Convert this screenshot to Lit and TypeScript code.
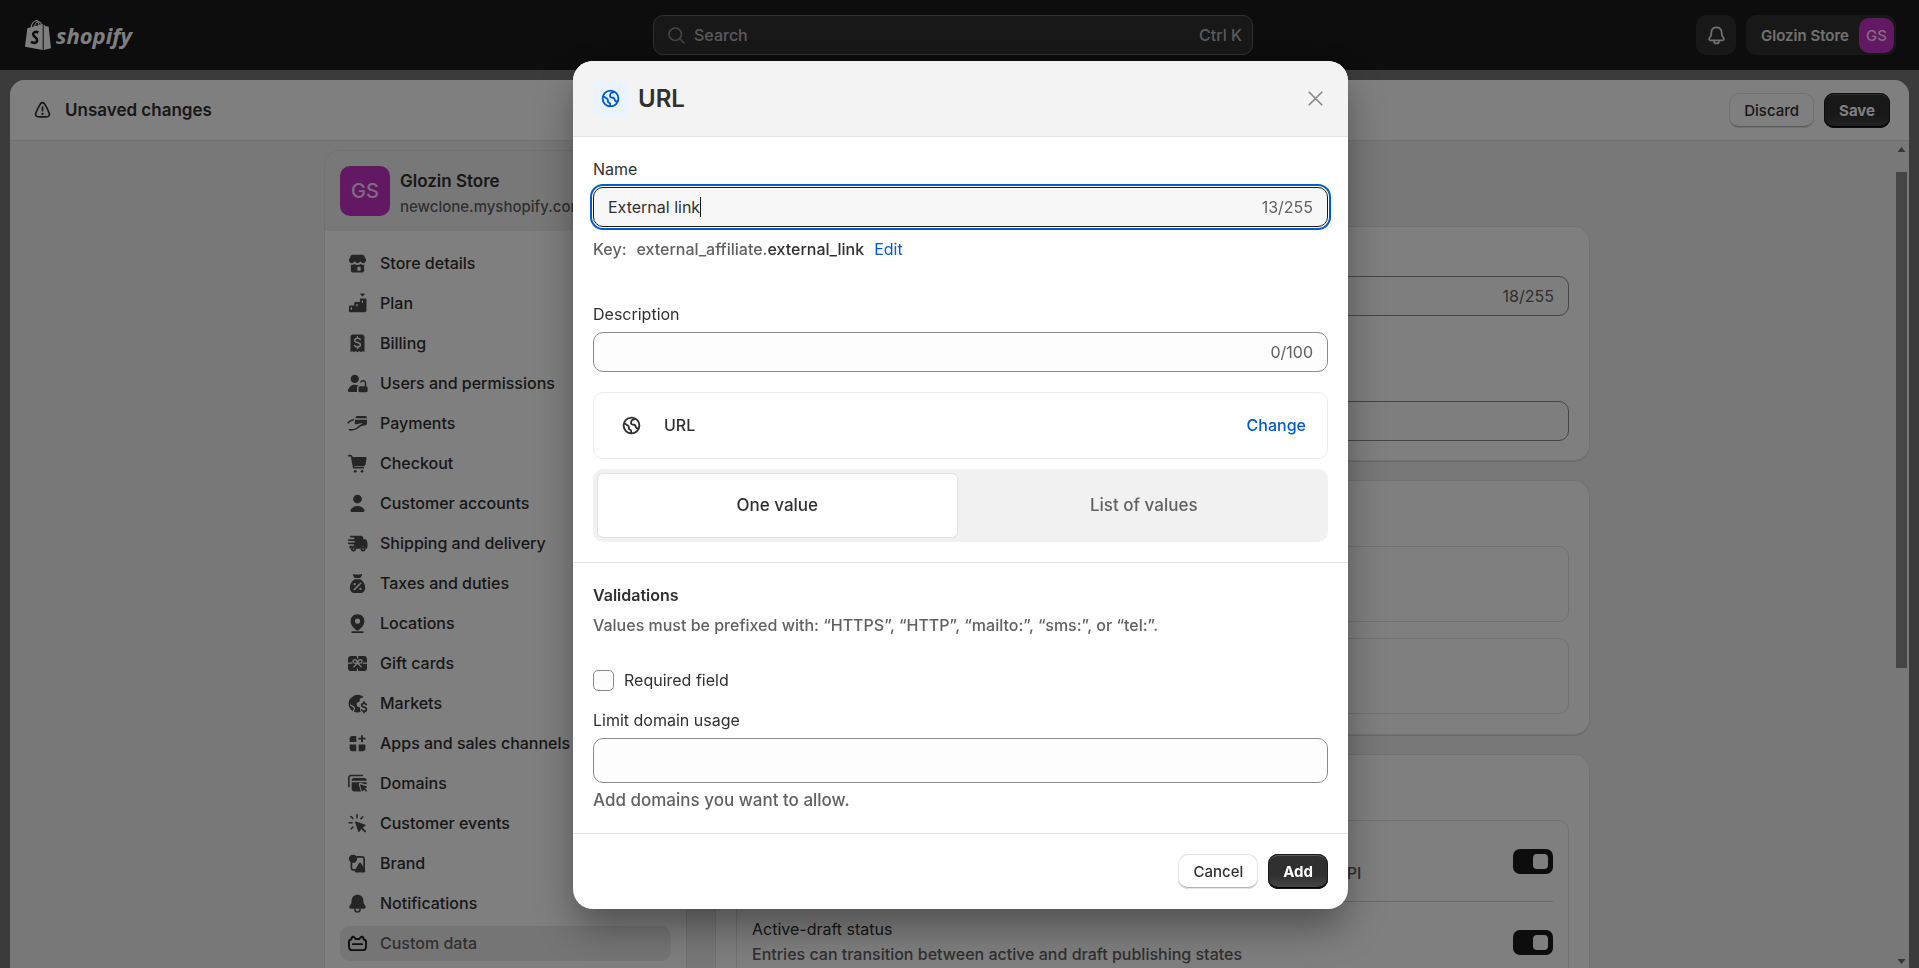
import { LitElement, html, svg, css, nothing, type TemplateResult } from "lit";
import { customElement, property } from "lit/decorators.js";
import { classMap } from "lit/directives/class-map.js";

const ICONS: Record<string, TemplateResult> = {
  store: svg`<path d="M6.2 3h7.6c.7 0 1.3.4 1.6 1l1.3 2.600c.5 1.800-.6 3.100-2.100 3.100-.6 0-1.200-.3-1.600-.7l-.7-.8-.8.8c-.4.4-.9.7-1.500.7s-1.100-.3-1.500-.7l-.8-.8-.7.8c-.4.4-1 .7-1.600.7-1.500 0-2.600-1.300-2.100-3.100l1.300-2.600c.3-.6.900-1 1.600-1z"/><path fill-rule="evenodd" d="M4.700 11c1 .2 2-.1 2.800-.7.7.6 1.600.9 2.500.9s1.800-.3 2.500-.9c.8.6 1.800.9 2.800.7v4.500c0 1-.8 1.700-1.700 1.700H6.400c-1 0-1.700-.8-1.700-1.700zM10.400 12.500h1.600c.3 0 .5.2.5.5v2.700h-2.600V13c0-.3.2-.5.5-.5z"/>`,
  plan: svg`<path fill-rule="evenodd" d="M11.900 6.900c0-.6.4-1 1-1h3.300c.6 0 1 .4 1 1v8.400c0 .9-.7 1.600-1.600 1.600H4.200c-.6 0-1-.4-1-1v-3.400c0-.6.4-1 1-1h3.200V9.700c0-.6.4-1 1-1h3.500zM4.600 13v2h1v-2zM9 10.300v1.900h1v-1.900zM13.400 7.500v1.900h1V7.500z"/><path d="M12.400 2h3.200v.8L14 4.400l-1.600-1.600z"/>`,
  billing: svg`<path fill-rule="evenodd" d="M6.300 2.800h7.400c1.100 0 1.900.8 1.900 1.900v12.200l-1.400-1-1.400 1-1.400-1-1.400 1-1.400-1-1.400 1-1.400-1-1.400 1V4.700c0-1.100.8-1.900 1.900-1.900z"/><path fill="none" stroke="#fff" stroke-width="1.200" stroke-linecap="round" d="M12.200 6.800c-.5-.7-1.200-1-2.200-1-1.300 0-2.200.7-2.200 1.700 0 2.300 4.500 1.100 4.500 3.500 0 1-1 1.700-2.300 1.700-1.100 0-1.900-.4-2.400-1.100M10 4.500v1.200M10 12.800V14"/>`,
  users: svg`<circle cx="7.800" cy="6.300" r="3.300"/><path d="M7.800 10.900c1.200 0 2.200.2 3 .6-.9.5-1.200 1-1.200 2v3.300H3.400c-1 0-1.400-1-1-1.800.9-2.600 3-4.100 5.400-4.100z"/><rect x="10.800" y="12.200" width="7.300" height="4.700" rx="1.200"/><path fill="none" stroke="currentColor" stroke-width="1.200" stroke-linecap="round" d="M12.700 8.900c.5-1.700 3.600-1.500 3.700.5v2.800"/>`,
  payments: svg`<path d="M8.500 5.100c.2-.7.800-1.100 1.500-1.100h6c.9 0 1.600.6 1.600 1.400v.3H8.300zM8 7h9.600v2.400c0 1.300-.9 2.100-2.100 2.100h-2.200L14 10c-1.300-.8-4.300.7-5.600.6-.5 0-.8-.5-.6-.9z"/><path fill="none" stroke="currentColor" stroke-width="1.400" stroke-linecap="round" stroke-linejoin="round" d="M2.600 9.300c1.300-1.300 2.600-2.100 4-2.300M3.800 15c4.200.4 5.500-.7 7.200-2.400 1-.9 2-.9 3.600-2"/>`,
  checkout: svg`<path fill="none" stroke="currentColor" stroke-width="1.400" stroke-linecap="round" stroke-linejoin="round" d="M3.100 3.700h1c.7 0 1.200.4 1.400 1.100l1.500 8.400h7.600"/><path d="M5.400 4.800h10.900c.6 0 1 .5.9 1.100l-.8 4.900c-.1.700-.6 1.200-1.300 1.200H6.700z"/><circle cx="8.200" cy="16.200" r="1.100"/><circle cx="13.600" cy="16.200" r="1.100"/>`,
  customer: svg`<circle cx="10" cy="6.400" r="3.500"/><path d="M10 12c2.500 0 4.500 1.200 5.500 3 .5.900-.1 1.800-1 1.800h-9c-.9 0-1.500-.9-1-1.800 1-1.800 3-3 5.500-3z"/>`,
  shipping: svg`<path d="M4.700 3.800h8c.9 0 1.600.6 1.800 1.400l.3 1.400h1c.8 0 1.500.5 1.700 1.300l.5 1.900v2.700c0 1-.5 1.700-1.300 1.700h-.2a2.200 2.200 0 0 0-4.300 0H9a2.200 2.200 0 0 0-4.300 0c-.7-.1-1.200-.6-1.200-1.400v-1h3.200c.9 0 .9-1.300 0-1.300H2.900c-.9 0-.9-1.300 0-1.300h4.300c.9 0 .9-1.300 0-1.300H3c-.9 0-.9-1.300 0-1.300h4c.9 0 .9-1.300 0-1.300H4.700c-.9 0-.9-1.500 0-1.500z"/><g fill="none" stroke="currentColor" stroke-width="1.400"><circle cx="6.800" cy="14.400" r="1.300"/><circle cx="14.400" cy="14.400" r="1.300"/></g>`,
  taxes: svg`<path d="M7.100 2.500c1.900.5 3.900.5 5.800 0 .6-.1.900.5.6 1l-1.200 2H7.700l-1.200-2c-.3-.5 0-1.100.6-1z"/><path d="M7.800 6.600h4.400c2.300 1.300 3.900 4 3.900 6.700 0 2.500-1.500 4.300-4 4.300H7.900c-2.500 0-4-1.800-4-4.300 0-2.700 1.600-5.400 3.900-6.700z"/><path stroke="#fff" stroke-width="1.300" stroke-linecap="round" d="M7.500 14.800l5-5"/><circle cx="7.700" cy="10.500" r=".9" fill="#fff"/><circle cx="12.300" cy="14.300" r=".9" fill="#fff"/>`,
  locations: svg`<path fill-rule="evenodd" d="M10 2.600c3.200 0 5.500 2.300 5.500 5.400 0 3.300-2.200 5.400-4.300 7.100-.7.600-1.700.6-2.400 0C6.700 13.400 4.500 11.300 4.500 8c0-3.100 2.300-5.400 5.500-5.400zm0 3.300a2.100 2.100 0 1 0 0 4.200 2.100 2.100 0 0 0 0-4.200z"/><rect x="5" y="16.100" width="10" height="1.400" rx=".7"/>`,
  gift: svg`<rect x="2.400" y="4" width="15.200" height="12" rx="2.500"/><g fill="none" stroke="#fff" stroke-width="1.100" stroke-linecap="round"><path d="M2.400 9.700h3M14.600 9.700h3M10 4v1.500M10 14.500V16M10 9.700l-3 3M10 9.700l3 3"/><path d="M10 9.700C9.600 7.500 8.600 6.700 7.500 6.900c-1.700.4-1.500 2.700.3 2.800zM10 9.700c.4-2.200 1.400-3 2.500-2.800 1.700.4 1.500 2.700-.3 2.800z"/></g>`,
  markets: svg`<path d="M10 2.900c1.900 0 3.600.7 4.900 1.900l-2.200.9c-.6.2-1 .8-1 1.500v1.200l-1.600.7c-.6.300-.9.900-.8 1.500l.3 1.200c.2.600.7 1 1.300 1l1.100.1v2.200c0 .7.300 1.200.8 1.500-.9.300-1.800.5-2.800.5-1 0-2-.2-2.900-.6l.8-2.400c.2-.8-.1-1.600-.8-2L4.600 10.800 4 8.700C4.700 5.400 7 2.900 10 2.900z"/><path d="M5.500 4.600A7.100 7.100 0 0 0 5 15.200l1.200.9.900-2.500-2.900-2z"/><path fill="none" stroke="currentColor" stroke-width="1.400" stroke-linecap="round" d="M17 10.800c-.4-.7-1-1-1.800-1-1.100 0-1.900.6-1.900 1.500 0 2 3.900 1.100 3.900 3.200 0 .9-.8 1.600-2 1.600-.9 0-1.600-.4-2-1M15.200 8.600v1M15.200 16.200v1"/>`,
  apps: svg`<path d="M5.800 3.900H9v4.900H3.700V6c0-1.200.9-2.100 2.100-2.100zM3.700 10.700H9v5.400H5.800c-1.200 0-2.100-.9-2.100-2.100zM10.900 10.700h5.400V14c0 1.200-.9 2.100-2.100 2.100h-3.300z"/><path stroke="currentColor" stroke-width="1.500" stroke-linecap="round" d="M13.600 3.900v4.400M11.400 6.100h4.400"/>`,
  domains: svg`<path fill="none" stroke="currentColor" stroke-width="1.300" stroke-linecap="round" stroke-linejoin="round" d="M3.100 12.600V5.300c0-1 .7-1.700 1.700-1.700h9"/><path d="M7.100 5.500h8.400c1 0 1.800.8 1.800 1.800v.5H5.300v-.5c0-1 .8-1.800 1.800-1.800zM5.300 9h12v1.700l-4.700-1.200c-1-.2-1.800.6-1.500 1.500l1.600 5.300H7.100c-1 0-1.800-.8-1.800-1.800z"/><path d="M12.500 10.700l4.700 1.500c.5.200.5.800.1 1l-1.200.7 1.600 1.700-.9.900-1.700-1.700-.7 1.200c-.3.400-.9.400-1-.1l-1.400-4.700c-.1-.4.200-.6.500-.5z"/>`,
  events: svg`<path d="M8.800 8.300l7 2.400c.8.300.8 1.200.1 1.500l-1.800 1 2.600 2.700c.6.700-.4 1.600-1 1l-2.700-2.600-1.100 1.900c-.3.700-1.300.6-1.500-.1L8.100 9c-.1-.5.200-.8.700-.7z"/><path stroke="currentColor" stroke-width="1.300" stroke-linecap="round" d="M9.600 3v2.300M4.700 4.400l1.500 1.500M3.300 9.400h2.300M14.200 4.600l-1.400 1.500M5 14.200l1.400-1.400"/>`,
  brand: svg`<circle cx="6.400" cy="6.200" r="3.300"/><path fill="none" stroke="currentColor" stroke-width="1.400" stroke-linejoin="round" stroke-linecap="round" d="M9.500 4.700h4c1 0 1.800.8 1.800 1.800v9M5.100 9.500v3.800c0 1 .8 1.800 1.800 1.800h1.500"/><path d="M11.200 9.600c.4-.6 1.200-.6 1.600 0l3.300 6c.4.700 0 1.500-.8 1.500H8.700c-.8 0-1.200-.8-.8-1.500z"/>`,
  bell: svg`<path d="M10 3c2.700 0 4.500 1.900 4.700 4.400l.2 2.400 1.500 2.200c.6 1-.1 2.200-1.200 2.200H4.800c-1.100 0-1.800-1.200-1.200-2.200l1.500-2.200.2-2.400C5.500 4.900 7.300 3 10 3z"/><path fill="none" stroke="currentColor" stroke-width="1.300" d="M8 14.200v.8c0 2.400 4 2.400 4 0v-.8"/>`,
  data: svg`<path fill="none" stroke="currentColor" stroke-width="1.500" stroke-linejoin="round" stroke-linecap="round" d="M5.200 6.600c0-2.300 1.700-2.700 2.800-.9l.5.700h3l.5-.7c1.100-1.800 2.800-1.400 2.800.9 1.400.3 2.200 1.400 2.100 2.800l-.2 3.700c-.1 1.300-1 2.200-2.300 2.200H5.600c-1.300 0-2.200-.9-2.300-2.200l-.2-3.700c-.1-1.400.7-2.500 2.100-2.800zM6.300 10.500h7.400"/>`,
  globe: svg`<g fill="none" stroke="currentColor" stroke-width="1.500" stroke-linejoin="round"><circle cx="10" cy="10" r="6.300"/><path d="M13.200 4.600l-2.300.8c-.5.200-.9.600-1 1.100l-.3 1.400c-.1.600.2 1 .8 1.200l1.700.3c.5.100.8.400 1 .8l.6 1.500c.2.500.6.700 1.100.6l1.200-.3M4 8l3.300 2.200c.4.300.6.700.6 1.200v.8c0 .4.200.8.600 1l.7.400c.5.300.6.800.5 1.300l-.3 1.300"/></g>`,
  search: svg`<g fill="none" stroke="currentColor" stroke-width="1.300" stroke-linecap="round"><circle cx="9" cy="9" r="5"/><path d="M12.800 12.800l3.200 3.200"/></g>`,
  bellOutline: svg`<g fill="none" stroke="currentColor" stroke-width="1.400" stroke-linejoin="round"><path d="M10 3.400c2.300 0 3.900 1.700 4.100 3.900l.2 2.500 1.500 2.500c.4.700-.1 1.500-.8 1.500H5c-.7 0-1.200-.8-.8-1.500l1.500-2.500.2-2.500c.2-2.200 1.800-3.900 4.100-3.900z"/><path d="M8 13.900v.6c0 2.500 4 2.500 4 0v-.6"/></g>`,
  warning: svg`<g fill="none" stroke="currentColor" stroke-width="1.400" stroke-linejoin="round" stroke-linecap="round"><path d="M8.500 4.500c.7-1.100 2.300-1.100 3 0 1.700 2.600 2.900 5 3.900 7.700.5 1.400-.3 2.700-1.700 2.800-2.500.2-4.900.2-7.400 0-1.400-.1-2.200-1.400-1.700-2.800C5.600 9.500 6.800 7.100 8.500 4.500zM10 7.300v2.800"/><path d="M10 12.600v.1" stroke-width="1.800"/></g>`,
  close: svg`<path fill="none" stroke="currentColor" stroke-width="1.400" stroke-linecap="round" d="M5 5l10 10M15 5L5 15"/>`,
};

@customElement("ui-icon")
export class UiIcon extends LitElement {
  @property() name = "";
  static styles = css`
    :host { display: inline-flex; flex: none; }
    svg { width: 25px; height: 25px; fill: currentColor; }
  `;
  render() {
    return html`<svg viewBox="0 0 20 20" aria-hidden="true">${ICONS[this.name] ?? nothing}</svg>`;
  }
}

const NAV: Array<[string, string]> = [
  ["store", "Store details"],
  ["plan", "Plan"],
  ["billing", "Billing"],
  ["users", "Users and permissions"],
  ["payments", "Payments"],
  ["checkout", "Checkout"],
  ["customer", "Customer accounts"],
  ["shipping", "Shipping and delivery"],
  ["taxes", "Taxes and duties"],
  ["locations", "Locations"],
  ["gift", "Gift cards"],
  ["markets", "Markets"],
  ["apps", "Apps and sales channels"],
  ["domains", "Domains"],
  ["events", "Customer events"],
  ["brand", "Brand"],
  ["bell", "Notifications"],
  ["data", "Custom data"],
];

const OPTIONS: Array<[string, string]> = [
  ["Storefronts access", "Let your entries be published in online stores or apps through the Storefront API"],
  ["Active-draft status", "Entries can transition between active and draft publishing states"],
];

@customElement("app-root")
export class AppRoot extends LitElement {
  static styles = css`
    :host {
      display: block;
      position: relative;
      height: 100vh;
      overflow: hidden;
      background: #767676;
      color: #303030;
      font: 400 16px/25px Inter, sans-serif;
      font-optical-sizing: none;
    }
    * { box-sizing: border-box; }
    h1, h2, p, ul { margin: 0; padding: 0; font-size: inherit; font-weight: inherit; }
    button, input { font: inherit; font-optical-sizing: none; color: inherit; margin: 0; }
    button { border: 0; background: none; padding: 0; }
    a { color: inherit; text-decoration: none; }

    .shell { display: flex; flex-direction: column; height: 100%; }
    .topbar {
      display: grid;
      grid-template-columns: 42fr 600px 43fr;
      align-items: center;
      height: 70px;
      flex: none;
      padding: 0 23px 0 25px;
      background: #1a1a1a;
      color: #e3e3e3;
    }
    .logo { display: flex; align-items: center; gap: 5px; color: #fff; }
    .logo svg { width: 26px; height: 30px; }
    .wordmark { font: italic 700 22px/30px "Open Sans", sans-serif; }
    .search {
      display: flex;
      align-items: center;
      gap: 5px;
      height: 40px;
      padding: 0 10px;
      border: 1px solid #616161;
      border-radius: 10px;
      background: #303030;
      color: #b5b5b5;
      font-weight: 500;
    }
    .search ui-icon { color: #8a8a8a; }
    .search span { flex: 1; text-align: left; }
    .search kbd { font: inherit; }
    .account { display: flex; justify-content: flex-end; gap: 10px; }
    .bell, .store {
      display: flex;
      align-items: center;
      justify-content: center;
      height: 40px;
      border-radius: 10px;
      background: #303030;
    }
    .bell { width: 40px; }
    .store { gap: 10px; padding: 0 2px 0 15px; font-size: 15px; font-weight: 600; }
    .avatar {
      display: grid;
      place-items: center;
      flex: none;
      width: 35px;
      height: 35px;
      border-radius: 10px;
      background: #c530c5;
      color: #ffd9ff;
      font-size: 15px;
      font-weight: 500;
    }
    .avatar.large { width: 50px; height: 50px; font-size: 20px; }

    .panel {
      display: flex;
      flex-direction: column;
      flex: 1;
      min-height: 0;
      margin: 10px 10px 0;
      border-radius: 15px 15px 0 0;
      overflow: hidden;
      background: #f1f1f1;
    }
    .savebar {
      display: flex;
      align-items: center;
      gap: 10px;
      height: 61px;
      flex: none;
      padding: 0 19px 0 20px;
      border-bottom: 1px solid #e3e3e3;
      background: #fff;
    }
    .savebar h2 { flex: 1; font-size: 17px; font-weight: 600; }

    .btn {
      height: 35px;
      padding: 0 15px;
      border-radius: 10px;
      font-size: 15px;
      font-weight: 500;
      background: #fff;
      box-shadow: inset 0 0 0 1px #e3e3e3, inset 0 -2px 0 #b5b5b5;
    }
    .btn.primary {
      color: #fff;
      font-weight: 700;
      background: linear-gradient(#303030 60%, #474747);
      box-shadow: inset 0 0 0 1px #1a1a1a, inset 0 -2px 0 #000, inset 0 2px 0 #5a5a5a;
    }

    .content { display: flex; flex: 1; min-height: 0; }
    .columns {
      display: flex;
      justify-content: center;
      gap: 30px;
      flex: 1;
      min-height: 0;
      overflow: hidden;
      padding: 10px 0 0 10px;
    }
    .scrollbar {
      display: flex;
      flex-direction: column;
      align-items: center;
      width: 15px;
      padding: 6px 0 4px;
      flex: none;
    }
    .track { flex: 1; padding-top: 20px; }
    .thumb { width: 11px; height: 63%; background: #8a8a8a; }
    .arrow { width: 8px; height: 5px; background: #6a6a6a; clip-path: polygon(50% 0, 100% 100%, 0 100%); }
    .arrow.down { clip-path: polygon(0 0, 100% 0, 50% 100%); }

    .card {
      border-radius: 15px;
      background: #fff;
      box-shadow: 0 0 0 1px #e3e3e3, 0 2px 1px #d4d4d4;
    }
    .sidebar { width: 361px; flex: none; overflow: hidden; border-radius: 15px 15px 0 0; }
    .profile {
      display: flex;
      align-items: center;
      gap: 10px;
      height: 80px;
      padding: 0 15px;
      background: #f1f1f1;
    }
    .profile h2 { padding-top: 5px; font-size: 17px; font-weight: 600; }
    .profile p { font-size: 15px; font-weight: 500; color: #616161; white-space: nowrap; }
    .nav { display: flex; flex-direction: column; gap: 5px; list-style: none; padding: 15px; }
    .nav a {
      display: flex;
      align-items: center;
      gap: 10px;
      height: 35px;
      padding: 0 5px;
      border-radius: 10px;
      font-weight: 500;
    }
    .nav ui-icon { color: #4a4a4a; }
    .nav .current { background: #ebebeb; color: #616161; }
    .nav .current ui-icon { color: #1a1a1a; }

    .main { display: flex; flex-direction: column; gap: 21px; width: 873px; flex: none; padding-top: 76px; }
    .section { padding: 20px; }
    .definition { display: flex; flex-direction: column; gap: 85px; padding-top: 49px; padding-bottom: 19px; }
    .boxes { display: flex; flex-direction: column; gap: 16px; padding-top: 65px; }
    .box { height: 76px; border: 1px solid #e3e3e3; border-radius: 10px; }
    .options { padding-top: 65px; }
    .option-list { border: 1px solid #e3e3e3; border-radius: 10px; padding: 0 15px; }
    .option { display: flex; align-items: center; justify-content: space-between; padding: 15px 0; }
    .option + .option { border-top: 1px solid #d4d4d4; }
    .option p { font-weight: 500; color: #616161; }
    .toggle {
      display: flex;
      justify-content: flex-end;
      width: 40px;
      height: 25px;
      padding: 5px;
      border-radius: 7px;
      background: #1a1a1a;
    }
    .knob { width: 15px; height: 15px; border-radius: 4px; background: #fff; }

    .field {
      display: flex;
      align-items: center;
      height: 40px;
      padding: 0 14px;
      border: 1px solid #8a8a8a;
      border-radius: 10px;
      background: #fdfdfd;
      color: #616161;
    }
    .field input {
      flex: 1;
      min-width: 0;
      border: 0;
      padding: 0;
      outline: none;
      background: none;
      color: #303030;
    }
    .field.focused {
      justify-content: space-between;
      border-color: #1a1a1a;
      background: #f7f7f7;
      outline: 2px solid #005bd3;
      outline-offset: 1px;
    }
    .field.focused input {
      flex: none;
      field-sizing: content;
      height: 20px;
      border-right: 1px solid #1a1a1a;
      caret-color: transparent;
    }
    .field.tall { height: 45px; }

    .overlay {
      position: absolute;
      inset: 0;
      display: flex;
      align-items: center;
      justify-content: center;
      padding: 2px 0 0 2px;
      background: rgba(0, 0, 0, 0.5);
    }
    .modal {
      width: 775px;
      border-radius: 20px;
      overflow: hidden;
      background: #fff;
      box-shadow: 0 20px 40px -4px rgba(0, 0, 0, 0.4);
    }
    .modal-head {
      display: flex;
      align-items: center;
      gap: 10px;
      padding: 0 20px;
      height: 76px;
      border-bottom: 1px solid #e3e3e3;
      background: #f3f3f3;
    }
    .badge {
      display: grid;
      place-items: center;
      width: 35px;
      height: 35px;
      border-radius: 5px;
      background: #eaf4ff;
      color: #005bd3;
    }
    .modal-head h1 { flex: 1; font-size: 24px; font-weight: 600; }
    .close { display: flex; color: #8a8a8a; }
    .block { display: flex; flex-direction: column; padding: 20px; }
    .block + .block { border-top: 1px solid #e3e3e3; }
    .label { margin-bottom: 5px; }
    .key { display: flex; gap: 10px; margin: 10px 0 40px; font-weight: 500; color: #616161; }
    .key b { font-weight: inherit; color: #303030; }
    .key .link { font-weight: 400; }
    .link { color: #005bd3; }
    .type {
      display: flex;
      align-items: center;
      gap: 20px;
      height: 67px;
      margin: 20px 0 10px;
      padding: 0 21px 0 25px;
      border: 1px solid #ebebeb;
      border-radius: 10px;
      font-weight: 500;
    }
    .type span { flex: 1; }
    .segmented {
      display: grid;
      grid-template-columns: 1fr 1fr;
      gap: 8px;
      padding: 5px;
      border-radius: 10px;
      background: #f1f1f1;
    }
    .segmented button {
      height: 63px;
      border-radius: 5px;
      font-size: 17px;
      font-weight: 500;
      color: #616161;
    }
    .segmented .chosen { background: #fff; color: #303030; box-shadow: 0 0 0 1px #e3e3e3; }
    .validations h2 { font-weight: 600; margin-bottom: 5px; }
    .validations .hint { font-weight: 500; color: #616161; }
    .check { display: flex; align-items: center; gap: 10px; margin: 30px 0 15px; }
    .check input {
      appearance: none;
      width: 21px;
      height: 21px;
      border: 1px solid #8a8a8a;
      border-radius: 5px;
      background: #fdfdfd;
    }
    .validations .help { margin-top: 5px; font-size: 17px; font-weight: 500; color: #616161; }
    .foot { flex-direction: row; justify-content: flex-end; gap: 10px; }
  `;

  firstUpdated() {
    this.renderRoot.querySelector<HTMLInputElement>("#name")?.focus();
  }

  private topbar() {
    return html`
      <header class="topbar">
        <a class="logo" href="#" aria-label="Shopify home">
          <svg viewBox="0 0 26 30" fill="currentColor" aria-hidden="true">
            <path d="M2.300 8.200 17.700 4v26L0 26.700z" />
            <path d="M18.700 4.300l2 2 2.900.3L26 28.200 18.700 30z" />
            <path fill="none" stroke="currentColor" stroke-width="1.100" d="M6 8c.6-3.800 2.700-6.900 5-7.200 1.800-.2 2.800 1.600 2.900 4.500M9.400 7.400C9.900 4 11.900 1.500 13.800 1.700c1.600.2 2.600 1.700 2.800 3.600M12.800 1.200c-.6-.7-1.200-.9-2-.6" />
            <path fill="none" stroke="#1a1a1a" stroke-width="2.600" d="M13.300 12.500c-2.200-1.100-5-.6-5.100 1.700-.1 2.600 4 2.900 3.900 5.900-.1 2.800-3.200 3.600-6.100 1.600" />
          </svg>
          <span class="wordmark">shopify</span>
        </a>
        <button class="search"><ui-icon name="search"></ui-icon><span>Search</span><kbd>Ctrl K</kbd></button>
        <div class="account">
          <button class="bell" aria-label="Notifications"><ui-icon name="bellOutline"></ui-icon></button>
          <button class="store">Glozin Store<span class="avatar">GS</span></button>
        </div>
      </header>
    `;
  }

  private sidebar() {
    return html`
      <aside class="card sidebar">
        <div class="profile">
          <span class="avatar large">GS</span>
          <div>
            <h2>Glozin Store</h2>
            <p>newclone.myshopify.com</p>
          </div>
        </div>
        <ul class="nav">
          ${NAV.map(
            ([icon, label]) => html`<li>
              <a href="#" class=${classMap({ current: icon === "data" })}><ui-icon name=${icon}></ui-icon>${label}</a>
            </li>`,
          )}
        </ul>
      </aside>
    `;
  }

  private main() {
    return html`
      <main class="main">
        <section class="card section definition">
          <div class="field"><input aria-label="Definition name" readonly />18/255</div>
          <div class="field"><input aria-label="Definition description" readonly /></div>
        </section>
        <section class="card section boxes">
          <div class="box"></div>
          <div class="box"></div>
        </section>
        <section class="card section options">
          <div class="option-list">
            ${OPTIONS.map(
              ([title, text]) => html`<div class="option">
                <div>
                  <h2>${title}</h2>
                  <p>${text}</p>
                </div>
                <button class="toggle" role="switch" aria-checked="true" aria-label=${title}>
                  <span class="knob"></span>
                </button>
              </div>`,
            )}
          </div>
        </section>
      </main>
    `;
  }

  private modal() {
    return html`
      <div class="overlay">
        <div class="modal" role="dialog" aria-modal="true" aria-labelledby="title">
          <div class="modal-head">
            <span class="badge"><ui-icon name="globe"></ui-icon></span>
            <h1 id="title">URL</h1>
            <button class="close" aria-label="Close"><ui-icon name="close"></ui-icon></button>
          </div>
          <div class="block">
            <label class="label" for="name">Name</label>
            <div class="field focused"><input id="name" .value=${"External link"} maxlength="255" />13/255</div>
            <p class="key"><span>Key:</span><span>external_affiliate.<b>external_link</b></span><a class="link" href="#">Edit</a></p>
            <label class="label" for="description">Description</label>
            <div class="field"><input id="description" maxlength="100" />0/100</div>
            <div class="type"><ui-icon name="globe"></ui-icon><span>URL</span><button class="link">Change</button></div>
            <div class="segmented">
              <button class="chosen" aria-pressed="true">One value</button>
              <button aria-pressed="false">List of values</button>
            </div>
          </div>
          <div class="block validations">
            <h2>Validations</h2>
            <p class="hint">Values must be prefixed with: “HTTPS”, “HTTP”, “mailto:”, “sms:”, or “tel:”.</p>
            <label class="check"><input type="checkbox" />Required field</label>
            <label class="label" for="domains">Limit domain usage</label>
            <div class="field tall"><input id="domains" /></div>
            <p class="help">Add domains you want to allow.</p>
          </div>
          <div class="block foot">
            <button class="btn">Cancel</button>
            <button class="btn primary">Add</button>
          </div>
        </div>
      </div>
    `;
  }

  render() {
    return html`
      <div class="shell">
        ${this.topbar()}
        <div class="panel">
          <div class="savebar">
            <ui-icon name="warning"></ui-icon>
            <h2>Unsaved changes</h2>
            <button class="btn">Discard</button>
            <button class="btn primary">Save</button>
          </div>
          <div class="content">
            <div class="columns">${this.sidebar()} ${this.main()}</div>
            <div class="scrollbar" aria-hidden="true">
              <span class="arrow"></span>
              <div class="track"><div class="thumb"></div></div>
              <span class="arrow down"></span>
            </div>
          </div>
        </div>
      </div>
      ${this.modal()}
    `;
  }
}
